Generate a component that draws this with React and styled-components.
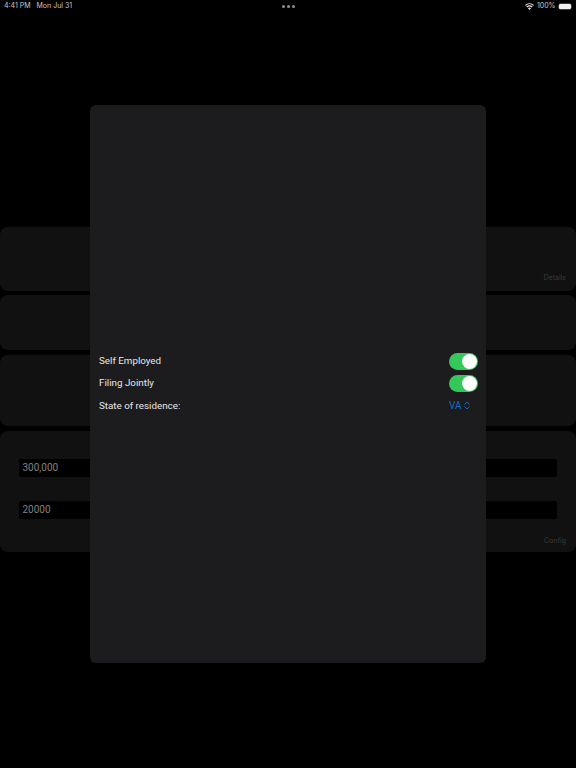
import React from "react";
import styled, { createGlobalStyle } from "styled-components";

const Global = createGlobalStyle`
  html, body { margin: 0; padding: 0; background: #000; }
  body { font-family: Roboto, "Liberation Sans", sans-serif; }
  #root { width: 576px; height: 768px; overflow: hidden; }
`;

const Page = styled.div`
  position: relative;
  width: 576px;
  height: 768px;
  background: #000;
  overflow: hidden;
`;

const StatusBar = styled.header`
  height: 12px;
  padding: 0 4px;
  display: grid;
  grid-template-columns: 1fr auto 1fr;
  align-items: center;
  color: #c8c8c8;
  font-family: Inter, sans-serif;
  font-size: 7px;
  line-height: 12px;
`;

const StatusLeft = styled.div`
  display: flex;
  gap: 6px;
`;

const StatusDots = styled.div`
  display: flex;
  gap: 2px;
`;

const Dot = styled.span`
  width: 3px;
  height: 3px;
  border-radius: 50%;
  background: #8c8c8c;
`;

const StatusRight = styled.div`
  display: flex;
  justify-content: flex-end;
  align-items: center;
  gap: 2.5px;
  padding-right: 1px;
`;

const Battery = styled.div`
  width: 12px;
  height: 5px;
  margin-left: 1px;
  border-radius: 1.5px;
  background: #f2f2f2;
  box-shadow: 0 0 0 0.5px #777;
`;

const Cards = styled.main`
  margin-top: 215px;
  display: flex;
  flex-direction: column;
`;

const Card = styled.section`
  position: relative;
  box-sizing: border-box;
  height: ${(p) => p.$height}px;
  margin-bottom: ${(p) => p.$gap}px;
  border-radius: 8px;
  background: #111111;
`;

const CardLabel = styled.span`
  position: absolute;
  right: 10px;
  bottom: ${(p) => p.$bottom}px;
  color: #3a3a3a;
  font-family: Inter, sans-serif;
  font-size: 7px;
`;

const InputStack = styled.div`
  padding: 28px 19px 0;
  display: flex;
  flex-direction: column;
  gap: 24px;
`;

const FieldBox = styled.div`
  height: 18px;
  padding-left: 3.5px;
  border-radius: 2px;
  background: #000;
  color: #808080;
  font-size: 10px;
  line-height: 18px;
`;

const Modal = styled.div`
  position: absolute;
  left: 90px;
  top: 105px;
  box-sizing: border-box;
  width: 396px;
  height: 558px;
  padding: 0 8px 1px 9px;
  border-radius: 6px;
  background: #1c1c1e;
  display: flex;
  flex-direction: column;
  justify-content: center;
  color: #e6e6e6;
`;

const Row = styled.div`
  height: 22.5px;
  display: flex;
  align-items: center;
  justify-content: space-between;
  font-size: 9.8px;
`;

const RowLabel = styled.span`
  padding-bottom: 2px;
`;

const Track = styled.div`
  width: 29px;
  height: 17px;
  padding: 1px;
  box-sizing: border-box;
  border-radius: 9px;
  background: #34c759;
  display: flex;
  justify-content: flex-end;
`;

const Knob = styled.div`
  width: 15px;
  height: 15px;
  border-radius: 50%;
  background: #fff;
`;

const Picker = styled.div`
  margin-right: 8px;
  padding-bottom: 2px;
  display: flex;
  align-items: center;
  gap: 2.5px;
  color: #0f6cc9;
  font-size: 10px;
`;

const Toggle = () => (
  <Track>
    <Knob />
  </Track>
);

export default function App() {
  return (
    <Page>
      <Global />
      <StatusBar>
        <StatusLeft>
          <span>4:41 PM</span>
          <span>Mon Jul 31</span>
        </StatusLeft>
        <StatusDots>
          <Dot />
          <Dot />
          <Dot />
        </StatusDots>
        <StatusRight>
          <svg width="9" height="7" viewBox="0 0 18 14" fill="#e8e8e8">
            <path d="M9 14 6 10.6a4.4 4.4 0 0 1 6 0L9 14Z" />
            <path d="M4.4 8.9 2.8 7.1a9.2 9.2 0 0 1 12.4 0l-1.6 1.8a6.8 6.8 0 0 0-9.2 0Z" />
            <path d="M1.5 5.6 0 3.8a13.4 13.4 0 0 1 18 0l-1.5 1.8a11.2 11.2 0 0 0-15 0Z" />
          </svg>
          <span>100%</span>
          <Battery />
        </StatusRight>
      </StatusBar>
      <Cards>
        <Card $height={64} $gap={4}>
          <CardLabel $bottom={9}>Details</CardLabel>
        </Card>
        <Card $height={55} $gap={5} />
        <Card $height={71} $gap={5} />
        <Card $height={121} $gap={0}>
          <InputStack>
            <FieldBox>300,000</FieldBox>
            <FieldBox>20000</FieldBox>
          </InputStack>
          <CardLabel $bottom={7}>Config</CardLabel>
        </Card>
      </Cards>
      <Modal>
        <Row>
          <RowLabel>Self Employed</RowLabel>
          <Toggle />
        </Row>
        <Row>
          <RowLabel>Filing Jointly</RowLabel>
          <Toggle />
        </Row>
        <Row>
          <RowLabel>State of residence:</RowLabel>
          <Picker>
            <span>VA</span>
            <svg width="6" height="9" viewBox="0 0 6 9" fill="none" stroke="#0f6cc9" strokeWidth="1" strokeLinecap="round" strokeLinejoin="round">
              <path d="M.8 3.2 3 1l2.2 2.2M.8 5.8 3 8l2.2-2.2" />
            </svg>
          </Picker>
        </Row>
      </Modal>
    </Page>
  );
}
